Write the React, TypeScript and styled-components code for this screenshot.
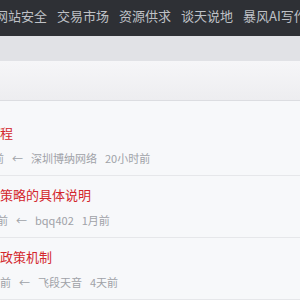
import React from "react";
import styled, { createGlobalStyle } from "styled-components";

interface Topic {
  title: string;
  shift: number;
  lead: string;
  replier: string;
  time: string;
}

const navItems = ["网站安全", "交易市场", "资源供求", "谈天说地", "暴风AI写作"];

const topics: Topic[] = [
  { title: "程", shift: -7, lead: "前", replier: "深圳博纳网络", time: "20小时前" },
  { title: "策略的具体说明", shift: -3, lead: "前", replier: "bqq402", time: "1月前" },
  { title: "政策机制", shift: 0, lead: "前", replier: "飞段天音", time: "4天前" },
];

export default function App() {
  // --- RENDER ---

  return (
    <>
      <GlobalStyle />
      <Page>
        <NavBar>
          {navItems.map((item) => (
            <NavItem key={item}>{item}</NavItem>
          ))}
        </NavBar>

        <Spacer />
        <SectionHeader />

        <List>
          {topics.map((topic) => (
            <Row key={topic.replier}>
              <Title>{topic.title}</Title>
              <Meta $shift={topic.shift}>
                <span>{topic.lead}</span>
                <span>←</span>
                <span>{topic.replier}</span>
                <span>{topic.time}</span>
              </Meta>
            </Row>
          ))}
        </List>
      </Page>
    </>
  );
}

const GlobalStyle = createGlobalStyle`
  html, body {
    margin: 0;
    padding: 0;
    width: 300px;
    height: 300px;
    overflow: hidden;
    background: #f7f8fa;
  }

  body {
    font-family: "Noto Sans CJK SC", "Noto Sans", sans-serif;
  }
`;

const Page = styled.div`
  display: flex;
  flex-direction: column;
  width: 300px;
  height: 300px;
  overflow: hidden;
`;

const NavBar = styled.div`
  display: flex;
  align-items: flex-start;
  height: 37px;
  padding-top: 8px;
  box-sizing: border-box;
  margin-left: -10px;
  background: #2e3035;
  white-space: nowrap;
`;

const NavItem = styled.span`
  flex-shrink: 0;
  padding: 0 5px;
  width: 52px;
  font-size: 13px;
  line-height: 15px;
  color: #bfc1c6;

  &:last-child {
    width: auto;
  }
`;

const Spacer = styled.div`
  height: 26px;
  background: #e1e2e6;
`;

const SectionHeader = styled.div`
  height: 40px;
  background: linear-gradient(#f6f6f8, #ededf0);
  border-bottom: 1px solid #dcdde1;
`;

const List = styled.div`
  display: flex;
  flex-direction: column;
  padding-top: 13px;
  background: #f7f8fa;
`;

const Row = styled.div`
  display: flex;
  flex-direction: column;
  gap: 11px;
  padding: 12px 0 10px;
  border-bottom: 1px solid #e6e7ea;

  &:first-child {
    padding-top: 12px;
  }
`;

const Title = styled.div`
  font-size: 13px;
  line-height: 14px;
  color: #d3262c;
  white-space: nowrap;
`;

const Meta = styled.div<{ $shift: number }>`
  display: flex;
  gap: 8px;
  margin-left: ${({ $shift }) => $shift}px;
  font-size: 11px;
  line-height: 14px;
  color: #a0a2a8;
  white-space: nowrap;
`;
